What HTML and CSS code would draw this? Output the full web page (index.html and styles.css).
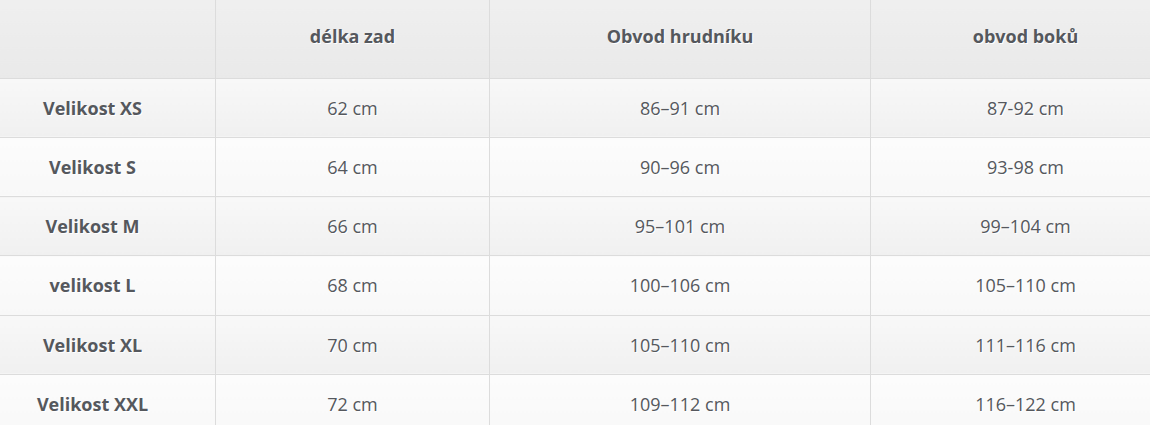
FILE: index.html
```html
<!DOCTYPE html>
<html lang="cs">
<head>
<meta charset="utf-8">
<title>Tabulka velikostí</title>
<link rel="stylesheet" href="styles.css">
</head>
<body>
<div class="wrap">
<table class="sizes">
  <colgroup>
    <col class="c1"><col class="c2"><col class="c3"><col class="c4">
  </colgroup>
  <thead>
    <tr><th></th><th>délka zad</th><th>Obvod hrudníku</th><th>obvod boků</th></tr>
  </thead>
  <tbody>
    <tr class="odd"><th>Velikost XS</th><td>62 cm</td><td>86–91 cm</td><td>87-92 cm</td></tr>
    <tr class="even"><th>Velikost S</th><td>64 cm</td><td>90–96 cm</td><td>93-98 cm</td></tr>
    <tr class="odd"><th>Velikost M</th><td>66 cm</td><td>95–101 cm</td><td>99–104 cm</td></tr>
    <tr class="even"><th>velikost L</th><td>68 cm</td><td>100–106 cm</td><td>105–110 cm</td></tr>
    <tr class="odd"><th>Velikost XL</th><td>70 cm</td><td>105–110 cm</td><td>111–116 cm</td></tr>
    <tr class="even"><th>Velikost XXL</th><td>72 cm</td><td>109–112 cm</td><td>116–122 cm</td></tr>
  </tbody>
</table>
</div>
</body>
</html>
```

FILE: styles.css
```css
html, body {
  margin: 0;
  padding: 0;
  background: #ffffff;
  overflow: hidden;
}

.wrap {
  width: 1150px;
  height: 425px;
  overflow: hidden;
}

.sizes {
  margin-left: -31px;
  width: 1211px;
  border-collapse: collapse;
  table-layout: fixed;
  font-family: "Open Sans", "Noto Sans", sans-serif;
  color: #55585d;
  text-shadow: 1px 1px 0 #ffffff;
}

.c1 { width: 246px; }
.c2 { width: 274px; }
.c3 { width: 381px; }
.c4 { width: 310px; }

.sizes th,
.sizes td {
  border: 1px solid #dcdcdc;
  text-align: center;
  vertical-align: middle;
  padding: 0;
}

.sizes thead th {
  height: 78px;
  padding-bottom: 6px;
  box-sizing: border-box;
  font-size: 18px;
  font-weight: 700;
  background: linear-gradient(to bottom, #efefef, #e9e9e9);
  border-top: 0;
}

.sizes tbody th {
  font-size: 18px;
  font-weight: 700;
}

.sizes tbody td {
  font-size: 18px;
  font-weight: 400;
}

.sizes tbody th,
.sizes tbody td {
  height: 59.25px;
  box-sizing: border-box;
}

.sizes tr.odd th,
.sizes tr.odd td {
  background: linear-gradient(to bottom, #f8f8f8, #f0f0f0);
}

.sizes tr.even th,
.sizes tr.even td {
  background: linear-gradient(to bottom, #fcfcfc, #f8f8f8);
}
```
